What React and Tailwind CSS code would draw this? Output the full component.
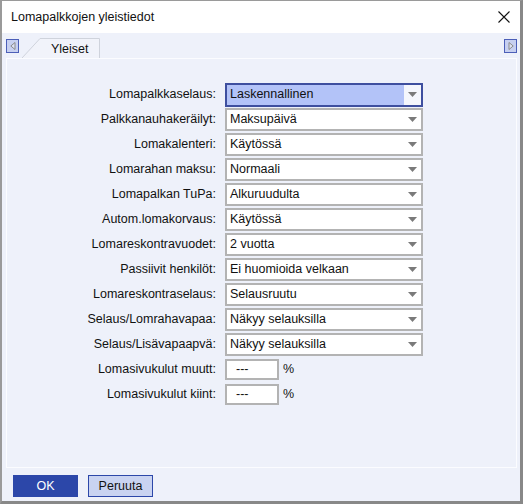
import React from "react";

const rows = [
  ["Lomapalkkaselaus:", "Laskennallinen", true],
  ["Palkkanauhakeräilyt:", "Maksupäivä"],
  ["Lomakalenteri:", "Käytössä"],
  ["Lomarahan maksu:", "Normaali"],
  ["Lomapalkan TuPa:", "Alkuruudulta"],
  ["Autom.lomakorvaus:", "Käytössä"],
  ["Lomareskontravuodet:", "2 vuotta"],
  ["Passiivit henkilöt:", "Ei huomioida velkaan"],
  ["Lomareskontraselaus:", "Selausruutu"],
  ["Selaus/Lomrahavapaa:", "Näkyy selauksilla"],
  ["Selaus/Lisävapaapvä:", "Näkyy selauksilla"],
];

function Arrow() {
  return (
    <svg width="9" height="5" viewBox="0 0 9 5" className="shrink-0">
      <path d="M0 0 H9 L4.5 5 Z" fill="#7a7a7a" />
    </svg>
  );
}

function Select({ value, focused }) {
  if (focused) {
    return (
      <div className="flex h-[24px] w-[198px] items-center border-2 border-[#3e4f9f] bg-[#b3c3f8]">
        <span className="flex-1 pl-[3px] text-[12.5px] leading-none text-[#111]">{value}</span>
        <div className="flex h-full w-[17px] items-center justify-center bg-[#f4f6fc]">
          <Arrow />
        </div>
      </div>
    );
  }
  return (
    <div className="flex h-[23px] w-[198px] items-center border-2 border-[#b3b3b3] bg-white">
      <span className="flex-1 pl-[3px] text-[12.5px] leading-none text-[#111]">{value}</span>
      <div className="flex w-[17px] items-center justify-center">
        <Arrow />
      </div>
    </div>
  );
}

function Label({ children }) {
  return (
    <div className="flex h-[23px] items-center justify-end whitespace-nowrap text-[12.5px] leading-none text-[#111]">
      {children}
    </div>
  );
}

function ScrollBtn({ dir }) {
  return (
    <div className="flex h-[14px] w-[13px] items-center justify-center border border-[#4c5fb8] bg-[#c7d0f0]">
      <svg width="6" height="8" viewBox="0 0 6 8">
        {dir === "left" ? (
          <path d="M5 0.5 L0.8 4 L5 7.5 Z" fill="#dde2f2" stroke="#8a8a8a" strokeWidth="1" />
        ) : (
          <path d="M1 0.5 L5.2 4 L1 7.5 Z" fill="#dde2f2" stroke="#8a8a8a" strokeWidth="1" />
        )}
      </svg>
    </div>
  );
}

export default function App() {
  return (
    <div
      className="flex h-[504px] w-[523px] flex-col border-t border-l-2 border-r-[3px] border-b-[3px] border-t-[#9a9a9a] border-l-[#9a9a9a] border-r-[#888] border-b-[#888] bg-[#eef1fa]"
      style={{ fontFamily: '"Liberation Sans", Arial, sans-serif' }}
    >
      {/* Title bar */}
      <div className="flex h-[32px] shrink-0 items-center justify-between bg-white pl-[9px] pr-[10px]">
        <span className="text-[12.5px] text-[#111]">Lomapalkkojen yleistiedot</span>
        <svg width="12" height="12" viewBox="0 0 12 12">
          <path d="M0.5 0.5 L11.5 11.5 M11.5 0.5 L0.5 11.5" stroke="#111" strokeWidth="1.1" />
        </svg>
      </div>

      {/* Tab row */}
      <div className="relative flex h-[25px] shrink-0 items-start pl-[4px] pr-[3px] pt-[6px]">
        <ScrollBtn dir="left" />
        <div className="relative ml-[3px] mt-[-1px] h-[20px] w-[78px]">
          <svg className="absolute left-0 top-0" width="78" height="20" viewBox="0 0 78 20">
            <path d="M0 20 L18 0.5 H77.5 V20" fill="#f1f3fa" stroke="#cfd3dc" strokeWidth="1" />
          </svg>
          <span className="absolute left-[29px] top-[2px] text-[12.5px] text-[#111]">Yleiset</span>
        </div>
        <div className="flex-1" />
        <ScrollBtn dir="right" />
      </div>

      {/* Content panel */}
      <div className="ml-[4px] mr-[3px] flex flex-1 flex-col border border-[#fbfcff] pt-[24px]">
        <div className="grid grid-cols-[209px_198px] gap-x-[9px] gap-y-[2px]">
          {rows.map(([label, value, focused]) => (
            <React.Fragment key={label}>
              <Label>{label}</Label>
              <div className="flex h-[23px] items-center">
                <Select value={value} focused={focused} />
              </div>
            </React.Fragment>
          ))}
          {["Lomasivukulut muutt:", "Lomasivukulut kiint:"].map((l) => (
            <React.Fragment key={l}>
              <Label>{l}</Label>
              <div className="flex h-[23px] items-center">
                <div className="flex h-[21px] w-[54px] items-center border-2 border-[#b3b3b3] bg-white pl-[9px] text-[12.5px] text-[#111]">
                  ---
                </div>
                <span className="ml-[4px] text-[12.5px] text-[#111]">%</span>
              </div>
            </React.Fragment>
          ))}
        </div>
      </div>

      {/* Buttons */}
      <div className="flex h-[33px] shrink-0 items-start gap-[10px] pl-[11px] pt-[7px]">
        <div className="flex h-[22px] w-[65px] items-center justify-center bg-[#2c47a9] text-[12.5px] text-white">
          OK
        </div>
        <div className="flex h-[22px] w-[65px] items-center justify-center border border-[#2c47a9] bg-[#c9d3f1] text-[12.5px] text-[#111]">
          Peruuta
        </div>
      </div>
    </div>
  );
}
